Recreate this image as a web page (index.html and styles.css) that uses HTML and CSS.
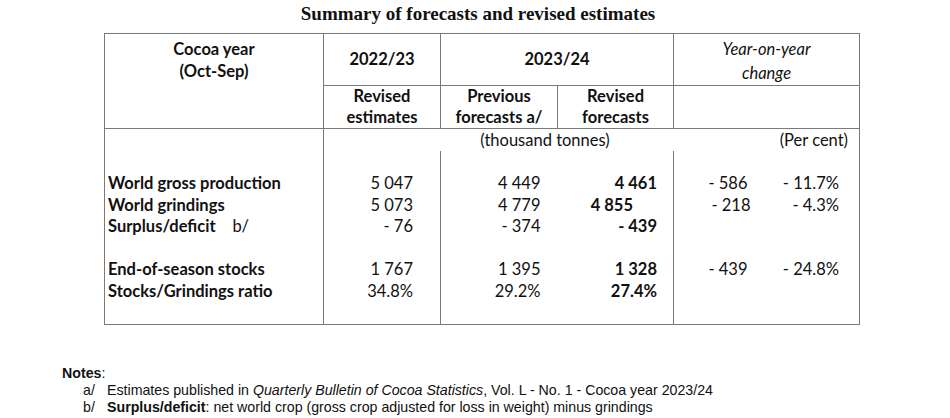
FILE: index.html
```html
<!DOCTYPE html>
<html>
<head>
<meta charset="utf-8">
<link rel="stylesheet" href="styles.css">
</head>
<body>
<h1 class="title">Summary of forecasts and revised estimates</h1>
<div class="wrap">
<table class="summary">
  <colgroup>
    <col class="c1"><col class="c2"><col class="c3"><col class="c4"><col class="c5"><col class="c6">
  </colgroup>
  <tr class="h1">
    <td class="hlabel b" rowspan="2">Cocoa year<br>(Oct-Sep)</td>
    <td class="l b hc">2022/23</td>
    <td class="l b hc" colspan="2">2023/24</td>
    <td class="l b hc yoy" colspan="2"><i>Year-on-year<br>change</i></td>
  </tr>
  <tr class="h2">
    <td class="l b hc">Revised<br>estimates</td>
    <td class="l b hc">Previous<br>forecasts a/</td>
    <td class="l b hc">Revised<br>forecasts</td>
    <td class="l b" colspan="2"></td>
  </tr>
  <tr class="units">
    <td></td>
    <td class="l"></td>
    <td class="tt" colspan="2">(thousand tonnes)</td>
    <td class="pc" colspan="2">(Per cent)</td>
  </tr>
  <tr class="sp"><td></td><td class="l"></td><td class="l"></td><td></td><td class="l"></td><td></td></tr>
  <tr class="row">
    <td class="lab"><b>World gross production</b></td>
    <td class="l n2">5 047</td>
    <td class="l n3">4 449</td>
    <td class="n4"><b>4 461</b></td>
    <td class="l n5">- 586</td>
    <td class="n6">- 11.7%</td>
  </tr>
  <tr class="row">
    <td class="lab"><b>World grindings</b></td>
    <td class="l n2">5 073</td>
    <td class="l n3">4 779</td>
    <td class="n4 off"><b>4 855</b></td>
    <td class="l n5 off5">- 218</td>
    <td class="n6">- 4.3%</td>
  </tr>
  <tr class="row">
    <td class="lab"><b>Surplus/deficit</b>&nbsp;&nbsp;&nbsp; b/</td>
    <td class="l n2">- 76</td>
    <td class="l n3">- 374</td>
    <td class="n4"><b>- 439</b></td>
    <td class="l n5"></td>
    <td class="n6"></td>
  </tr>
  <tr class="row"><td></td><td class="l"></td><td class="l"></td><td></td><td class="l"></td><td></td></tr>
  <tr class="row">
    <td class="lab"><b>End-of-season stocks</b></td>
    <td class="l n2">1 767</td>
    <td class="l n3">1 395</td>
    <td class="n4"><b>1 328</b></td>
    <td class="l n5">- 439</td>
    <td class="n6">- 24.8%</td>
  </tr>
  <tr class="row">
    <td class="lab"><b>Stocks/Grindings ratio</b></td>
    <td class="l n2">34.8%</td>
    <td class="l n3">29.2%</td>
    <td class="n4"><b>27.4%</b></td>
    <td class="l n5"></td>
    <td class="n6"></td>
  </tr>
  <tr class="sp2"><td></td><td class="l"></td><td class="l"></td><td></td><td class="l"></td><td></td></tr>
</table>
</div>
<div class="notes">
  <div class="notes-head"><b>Notes</b>:</div>
  <div class="note"><span class="mark">a/</span><span>Estimates published in <i>Quarterly Bulletin of Cocoa Statistics</i>, Vol. L - No. 1 - Cocoa year 2023/24</span></div>
  <div class="note"><span class="mark">b/</span><span><b>Surplus/deficit</b>: net world crop (gross crop adjusted for loss in weight) minus grindings</span></div>
</div>
</body>
</html>
```
FILE: styles.css
```css
html, body {
  margin: 0;
  padding: 0;
  background: #fff;
  color: #111;
}
body {
  width: 950px;
  height: 418px;
  overflow: hidden;
}
.title {
  margin: 0;
  padding-top: 3px;
  height: 33px;
  box-sizing: border-box;
  font-family: "Liberation Serif", serif;
  font-weight: bold;
  font-size: 19px;
  line-height: 22px;
  text-align: center;
  padding-left: 6px;
}
.wrap {
  padding-left: 104px;
}
.summary {
  border-collapse: collapse;
  table-layout: fixed;
  width: 756px;
  border: 1px solid #7a7a7a;
  font-family: Lato, sans-serif;
  font-size: 16.5px;
  color: #111;
}
.c1 { width: 219px; }
.c2 { width: 117px; }
.c3 { width: 117px; }
.c4 { width: 116px; }
.c5 { width: 93px; }
.c6 { width: 93px; }
.summary td {
  padding: 0;
  white-space: nowrap;
}
.l { border-left: 1px solid #7a7a7a; }
.b { border-bottom: 1px solid #7a7a7a; }
.hlabel {
  text-align: center;
  vertical-align: top;
  padding-top: 4px !important;
  line-height: 22px;
  font-weight: bold;
}
.hc {
  text-align: center;
  font-weight: bold;
  line-height: 21px;
}
.h1 { height: 49px; }
.h2 { height: 43px; }
.yoy { line-height: 24px; font-weight: normal; padding-top: 3px !important; }
.units { height: 22px; line-height: 22px; }
.tt { text-align: center; padding-right: 24px !important; }
.pc { text-align: right; padding-right: 11px !important; }
.sp { height: 22px; }
.row { height: 21.5px; line-height: 21.5px; }
.sp2 { height: 22px; }
.lab { padding-left: 3px !important; }
.n2, .n3, .n4, .n5, .n6 { text-align: right; }
.n2 { padding-right: 27px !important; }
.n3 { padding-right: 17px !important; }
.n4 { padding-right: 16px !important; }
.n4.off { padding-right: 40px !important; }
.n5 { padding-right: 19px !important; }
.n5.off5 { padding-right: 16px !important; }
.n6 { padding-right: 20px !important; }
.notes {
  margin-top: 40px;
  font-family: "Liberation Sans", Arial, sans-serif;
  font-size: 14.2px;
  line-height: 17px;
  color: #111;
}
.notes-head {
  padding-left: 62px;
}
.note {
  display: flex;
  padding-left: 83px;
}
.mark {
  width: 24px;
  flex: none;
}
```
